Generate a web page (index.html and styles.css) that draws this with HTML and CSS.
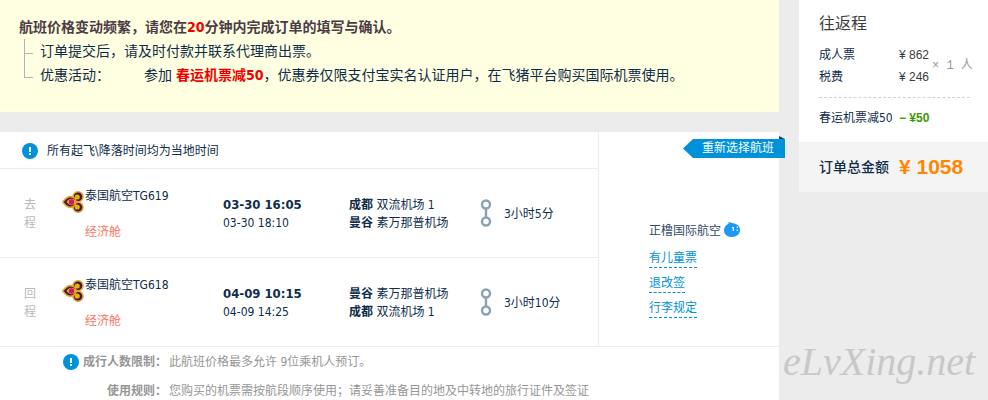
FILE: index.html
```html
<!DOCTYPE html>
<html lang="zh-CN">
<head>
    <meta charset="UTF-8">
    <meta name="viewport" content="width=device-width, initial-scale=1.0">
    <title>填写订单</title>
    <link rel="stylesheet" href="styles.css">
</head>
<body>
<svg class="symbols" aria-hidden="true">
    <symbol id="airline-logo" viewBox="0 0 22 22">
        <g fill="#4a1248" stroke="#dda72c" stroke-width="1.500">
            <circle cx="16" cy="5.800" r="5"/>
            <circle cx="16" cy="16.200" r="5"/>
            <path d="M0.800 11C4 6.500 8 4.500 11.500 6.500C15 9 15 13 11.500 15.500C8 17.500 4 15.500 0.800 11Z"/>
        </g>
        <circle cx="15.200" cy="6" r="2.600" fill="#e6b400"/>
        <circle cx="15.200" cy="16" r="2.600" fill="#e6b400"/>
        <path d="M4.500 11C7 7 12 6.500 14 11C12 15.500 7 15 4.500 11Z" fill="#e6b400"/>
        <circle cx="9.500" cy="11" r="2.700" fill="#d0127a"/>
    </symbol>
    <symbol id="route" viewBox="0 0 12 28">
        <g fill="none" stroke="#8aa2b4" stroke-width="2.400">
            <circle cx="6" cy="5.500" r="4"/>
            <circle cx="6" cy="22.500" r="4"/>
            <path d="M6 9.500V18.500"/>
        </g>
    </symbol>
    <symbol id="alert" viewBox="0 0 16 16">
        <circle cx="8" cy="8" r="8" fill="#0092d8"/>
        <path d="M7 4H9V9H7ZM7 10H9V12H7Z" fill="#fff"/>
    </symbol>
</svg>

<div class="page">
    <main class="main">
        <section class="notice">
            <h2>航班价格变动频繁，请您在<em>20</em>分钟内完成订单的填写与确认。</h2>
            <ul>
                <li>订单提交后，请及时付款并联系代理商出票。</li>
                <li>
                    <span class="notice-label">优惠活动：</span>
                    <span>参加 <strong>春运机票减50</strong>，优惠券仅限支付宝实名认证用户，在飞猪平台购买国际机票使用。</span>
                </li>
            </ul>
        </section>

        <section class="card">
            <div class="trip">
                <div class="flights">
                    <div class="tip">
                        <svg class="alert"><use href="#alert"/></svg>
                        所有起飞\降落时间均为当地时间
                    </div>
                    <table>
                        <tr>
                            <th class="direction">去<br>程</th>
                            <td class="airline">
                                <div class="airline-box">
                                    <svg class="logo"><use href="#airline-logo"/></svg>
                                    <div>泰国航空TG619<span class="cabin">经济舱</span></div>
                                </div>
                            </td>
                            <td class="time"><b>03-30 16:05</b><br>03-30 18:10</td>
                            <td class="airport"><b>成都</b> 双流机场 1<br><b>曼谷</b> 素万那普机场</td>
                            <td class="route"><svg><use href="#route"/></svg></td>
                            <td>3小时5分</td>
                        </tr>
                        <tr>
                            <th class="direction">回<br>程</th>
                            <td class="airline">
                                <div class="airline-box">
                                    <svg class="logo"><use href="#airline-logo"/></svg>
                                    <div>泰国航空TG618<span class="cabin">经济舱</span></div>
                                </div>
                            </td>
                            <td class="time"><b>04-09 10:15</b><br>04-09 14:25</td>
                            <td class="airport"><b>曼谷</b> 素万那普机场<br><b>成都</b> 双流机场 1</td>
                            <td class="route"><svg><use href="#route"/></svg></td>
                            <td>3小时10分</td>
                        </tr>
                    </table>
                </div>
                <div class="agent">
                    <a class="reselect" href="#">重新选择航班</a>
                    <div class="agent-name">
                        正橹国际航空
                        <svg class="chat" viewBox="0 0 16 15">
                            <path d="M4.500 0L9 1.200C13 1.500 16 4 16 8C16 12 12.500 15 8 15C3.500 15 0 12.500 0 8.500C0 5.500 1.500 3.500 4.500 1.800Z" fill="#1c98f5"/>
                            <path d="M8 5.500H9.300V9M13.300 4.500V6M13.300 7.500V9" fill="none" stroke="#fff" stroke-width="1.200"/>
                        </svg>
                    </div>
                    <a class="rule" href="#">有儿童票</a>
                    <a class="rule" href="#">退改签</a>
                    <a class="rule" href="#">行李规定</a>
                </div>
            </div>
            <dl class="limits">
                <dt><svg class="alert"><use href="#alert"/></svg>成行人数限制：</dt>
                <dd>此航班价格最多允许 9位乘机人预订。</dd>
                <dt>使用规则：</dt>
                <dd>您购买的机票需按航段顺序使用；请妥善准备目的地及中转地的旅行证件及签证</dd>
            </dl>
        </section>
    </main>

    <aside class="side">
        <div class="price">
            <h3>往返程</h3>
            <div class="fares">
                <dl>
                    <dt>成人票</dt>
                    <dd>¥ 862</dd>
                    <dt>税费</dt>
                    <dd>¥ 246</dd>
                </dl>
                <span class="count">× 1 人</span>
            </div>
            <dl class="discount">
                <dt>春运机票减50</dt>
                <dd>− ¥50</dd>
            </dl>
        </div>
        <dl class="total">
            <dt>订单总金额</dt>
            <dd>¥ 1058</dd>
        </dl>
        <div class="watermark">eLvXing.net</div>
    </aside>
</div>
</body>
</html>
```
FILE: styles.css
```css
* {
    box-sizing: border-box;
}

body {
    margin: 0;
    background: #ececec;
    color: #0f2d4b;
    font: 12px/18px "DejaVu Sans Condensed", "Noto Sans CJK SC", sans-serif;
}

h2, h3, ul, dl, dd {
    margin: 0;
    padding: 0;
}

a {
    text-decoration: none;
}

.symbols {
    position: absolute;
    width: 0;
    height: 0;
}

.page {
    display: flex;
    gap: 20px;
    height: 100vh;
    overflow: hidden;
}

.main {
    flex: 1;
    display: flex;
    flex-direction: column;
    gap: 20px;
    min-width: 0;
}

/* Notice */
.notice {
    padding: 15px 19px 25px;
    background: #ffffe1;
    font-size: 14px;
    line-height: 24px;
    padding-bottom: 24px;
}

.notice h2 {
    color: #4b3c46;
    font-size: 14px;
}

.notice em {
    color: #f00000;
    font-style: normal;
}

.notice ul {
    margin-left: 5px;
    list-style: none;
}

.notice li {
    display: flex;
    gap: 7px;
}

.notice li::before {
    content: "";
    width: 8px;
    height: 14px;
    border: solid #b4b4b4;
    border-width: 0 0 1px 1px;
}

.notice li + li::before {
    height: 24px;
    margin: -10px 0 10px;
}

.notice-label {
    width: 97px;
}

.notice strong {
    color: #f00000;
}

/* Trip */
.card {
    flex: 1;
    background: #fff;
}

.trip {
    display: flex;
    border-bottom: 1px solid #ececec;
}

.flights {
    flex: 1;
    border-right: 1px solid #ececec;
}

.tip {
    display: flex;
    align-items: center;
    gap: 9px;
    height: 36px;
    padding: 1px 0 0 22px;
}

.alert {
    width: 16px;
    height: 16px;
}

table {
    width: 100%;
    border-spacing: 0;
}

th, td {
    height: 89px;
    padding: 2px 0 0;
    border-top: 1px solid #ececec;
    text-align: left;
}

.direction {
    width: 62px;
    padding-left: 24px;
    color: #b9b9b9;
    font-weight: normal;
}

.airline {
    width: 161px;
}

.airline-box {
    display: flex;
    gap: 1px;
}

.logo {
    width: 22px;
    height: 22px;
    margin-top: 4px;
}

.cabin {
    display: block;
    margin-top: 18px;
    color: #ff7364;
}

.time {
    width: 126px;
}

.time b {
    font-size: 13px;
}

.airport {
    width: 131px;
}

.route {
    width: 24px;
    padding: 0;
}

.route svg {
    display: block;
    width: 12px;
    height: 28px;
}

/* Agent */
.agent {
    position: relative;
    display: flex;
    flex-direction: column;
    align-items: flex-start;
    gap: 7px;
    width: 180px;
    padding: 90px 0 0 50px;
}

.reselect {
    position: absolute;
    top: 7px;
    right: -6px;
    padding: 0 11px 1px 19px;
    background: #0092d8;
    clip-path: polygon(0 50%, 10px 0, 100% 0, 100% 100%, 10px 100%);
    color: #fff;
}

.agent::after {
    content: "";
    position: absolute;
    top: 4px;
    right: -6px;
    border: solid transparent;
    border-width: 0 6px 3px 0;
    border-bottom-color: #004b6e;
}

.agent-name {
    display: flex;
    gap: 3px;
    margin-bottom: 2px;
    color: #324b69;
}

.chat {
    width: 16px;
    height: 15px;
}

.rule {
    border-bottom: 1px dashed #0092d8;
    color: #0092d8;
}

.rule + .rule {
    margin-top: -1px;
}

/* Limits */
.limits {
    display: grid;
    grid-template-columns: 167px 1fr;
    gap: 11px 2px;
    padding-top: 6px;
    color: #969696;
}

.limits dt {
    display: flex;
    justify-content: flex-end;
    align-items: center;
    gap: 4px;
    font-weight: bold;
}

/* Price */
.side {
    width: 189px;
}

.price {
    padding: 13px 15px 15px 20px;
    background: #fff;
}

.price h3 {
    color: #3c3c3c;
    font-size: 16px;
    font-weight: normal;
    line-height: 22px;
}

.price dl, .total {
    display: grid;
    grid-template-columns: 80px auto;
}

.fares {
    display: flex;
    align-items: center;
    gap: 3px;
    margin-right: 3px;
    padding: 9px 0;
    border-bottom: 1px dashed #d2d2d2;
}

.fares dl {
    line-height: 22px;
}

.price dd {
    color: #3c3c3c;
    font-family: "Liberation Sans", sans-serif;
    white-space: nowrap;
}

.count {
    color: #969696;
    font-family: "Liberation Mono", "Noto Sans CJK SC", monospace;
    white-space: nowrap;
}

.discount {
    padding-top: 11px;
}

.price .discount dd {
    color: #3c9b00;
    font-weight: bold;
}

.total {
    align-items: center;
    height: 50px;
    padding-left: 20px;
    background: #f4f4f4;
}

.total dt {
    font-size: 14px;
    font-weight: 500;
}

.total dd {
    color: #ff8700;
    font: bold 21px/24px "Liberation Sans", sans-serif;
}

.watermark {
    margin: 146px 0 0 -16px;
    color: #c8c8c8;
    font: italic 40px/48px "Liberation Serif", serif;
}
```
